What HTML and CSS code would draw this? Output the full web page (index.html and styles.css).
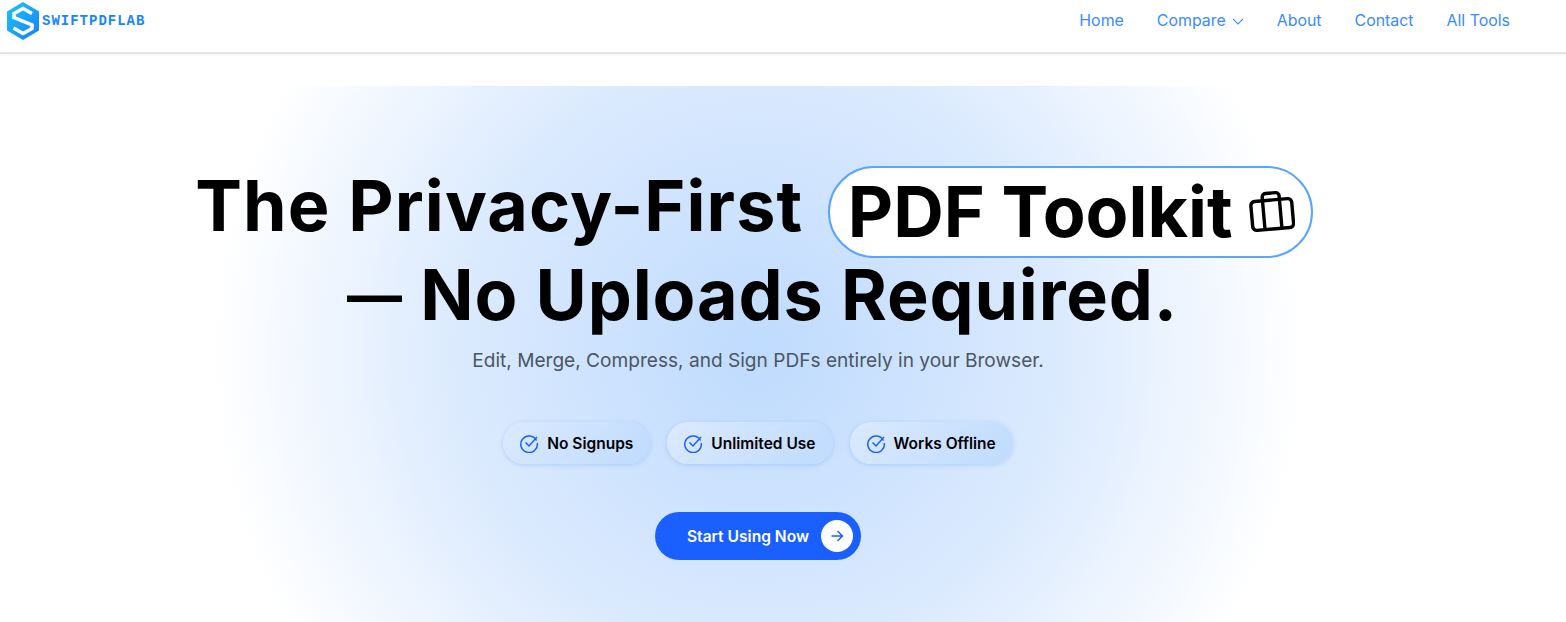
FILE: index.html
```html
<!DOCTYPE html>
<html lang="en">
<head>
  <meta charset="UTF-8">
  <meta name="viewport" content="width=device-width, initial-scale=1.0">
  <title>SwiftPDFLab</title>
  <link rel="stylesheet" href="styles.css">
</head>
<body>

  <header class="site-header">
    <a href="#" class="logo">
      <svg class="logo-mark" width="34" height="40" viewBox="0 0 34 40">
        <defs>
          <linearGradient id="logoGrad" x1="0" y1="0" x2="1" y2="1">
            <stop offset="0" stop-color="#19c8f5"/>
            <stop offset="1" stop-color="#1a7dfb"/>
          </linearGradient>
        </defs>
        <path fill="url(#logoGrad)" d="M17 1 33 10.500V29.500L17 39 1 29.500V10.500Z"/>
        <path fill="none" stroke="#fff" stroke-width="3.500" d="M26 12.500 17 7.500 8 12.500V16.500L26 24V27.500L17 32.500 7.500 27"/>
      </svg>
      <span class="logo-text">SWIFTPDFLAB</span>
    </a>
    <nav class="nav">
      <a href="#">Home</a>
      <a href="#" class="nav-drop">Compare
        <svg width="12" height="12" viewBox="0 0 12 12"><path d="M1 3.800 6 8.800 11 3.800" fill="none" stroke="currentColor" stroke-width="1.200"/></svg>
      </a>
      <a href="#">About</a>
      <a href="#">Contact</a>
      <a href="#">All Tools</a>
    </nav>
  </header>

  <section class="hero">
    <h1 class="hero-title">
      <span class="title-line"><span class="title-lead">The Privacy-First</span>
        <span class="title-pill">PDF Toolkit
          <svg class="case-icon" width="46" height="46" viewBox="0 0 46 46">
            <g fill="none" stroke="#000" stroke-width="3.400" stroke-linejoin="round" transform="rotate(-5 23 23)">
              <rect x="2.500" y="11" width="41" height="29" rx="4"/>
              <path d="M14.500 11V40M31.500 11V40M14.500 11V7.500A3.500 3.500 0 0 1 18 4H28A3.500 3.500 0 0 1 31.500 7.500V11"/>
            </g>
          </svg>
        </span>
      </span>
      <span class="title-line title-second"><span class="title-dash">—</span> No Uploads Required.</span>
    </h1>
    <p class="hero-sub">Edit, Merge, Compress, and Sign PDFs entirely in your Browser.</p>

    <div class="chips">
      <div class="chip">
        <svg width="20" height="20" viewBox="0 0 20 20"><path d="M17.500 7.500A8.300 8.300 0 1 0 18.300 10M6.500 9.500 10 13 18 4" fill="none" stroke="#1a5fff" stroke-width="1.500"/></svg>
        No Signups
      </div>
      <div class="chip">
        <svg width="20" height="20" viewBox="0 0 20 20"><path d="M17.500 7.500A8.300 8.300 0 1 0 18.300 10M6.500 9.500 10 13 18 4" fill="none" stroke="#1a5fff" stroke-width="1.500"/></svg>
        Unlimited Use
      </div>
      <div class="chip">
        <svg width="20" height="20" viewBox="0 0 20 20"><path d="M17.500 7.500A8.300 8.300 0 1 0 18.300 10M6.500 9.500 10 13 18 4" fill="none" stroke="#1a5fff" stroke-width="1.500"/></svg>
        Works Offline
      </div>
    </div>

    <a href="#" class="start-btn">Start Using Now
      <span class="start-arrow">
        <svg width="14" height="14" viewBox="0 0 14 14"><path d="M1.500 7H12.500M7.500 2 12.500 7 7.500 12" fill="none" stroke="#1a5fff" stroke-width="1.400"/></svg>
      </span>
    </a>
  </section>

</body>
</html>
```

FILE: styles.css
```css
* {
  box-sizing: border-box;
}

body {
  margin: 0;
  font-family: Inter, "Noto Sans", sans-serif;
  background-color: #fff;
  color: #000;
  overflow: hidden;
}

a {
  text-decoration: none;
}

.site-header {
  height: 54px;
  display: flex;
  justify-content: space-between;
  padding: 0 56px 14px 6px;
  border-bottom: 2px solid #e5e5e5;
  box-shadow: 0 1px 2px rgba(0, 0, 0, 0.05);
  align-items: flex-start;
}

.logo {
  display: flex;
  align-items: center;
  padding-top: 1px;
}

.logo-text {
  font-family: "Liberation Mono", monospace;
  font-weight: 700;
  font-size: 14px;
  letter-spacing: 1px;
  color: #1a86fb;
  margin-left: 2px;
}

.nav {
  display: flex;
  gap: 33px;
  padding-top: 11px;
}

.nav a {
  font-size: 15.900px;
  line-height: 20px;
  color: #3a8bff;
  display: flex;
  align-items: center;
  gap: 6px;
}

.hero {
  width: 1516px;
  height: 536px;
  margin-top: 32px;
  padding-top: 75px;
  display: flex;
  flex-direction: column;
  align-items: center;
  background: radial-gradient(circle 545px at center, #bfdbfe 0%, #dbeafe 55%, #fff 100%);
}

.hero-title {
  margin: 0;
  font-size: 70px;
  font-weight: 700;
  line-height: 90px;
  text-align: center;
  white-space: nowrap;
}

.title-line {
  display: block;
}

.title-second {
  margin-top: -1px;
  padding-left: 9px;
  letter-spacing: 0.850px;
}

.title-lead {
  letter-spacing: 1.100px;
}

.title-dash {
  font-size: 55px;
  vertical-align: 5px;
}

.title-pill {
  display: inline-flex;
  align-items: center;
  gap: 16px;
  height: 92px;
  margin: -10px 8px -10px 8px;
  padding: 0 16px 0 18px;
  background-color: #fff;
  border: 2px solid #5aa5ff;
  border-radius: 46px;
  vertical-align: middle;
}

.case-icon {
  flex-shrink: 0;
}

.hero-sub {
  margin: 6px 0 0;
  font-size: 19.100px;
  line-height: 28px;
  color: #4b5563;
}

.chips {
  display: flex;
  gap: 17px;
  margin-top: 48px;
}

.chip {
  display: flex;
  align-items: center;
  gap: 8px;
  height: 42px;
  padding: 0 17px 0 16px;
  font-size: 15.500px;
  font-weight: 600;
  border-radius: 21px;
  background: linear-gradient(135deg, #dbeafe, #bfdbfe);
  box-shadow: 0 1px 4px rgba(59, 130, 246, 0.25);
}

.start-btn {
  display: flex;
  align-items: center;
  gap: 12px;
  height: 48px;
  margin-top: 48px;
  padding: 0 8px 0 32px;
  font-size: 15.600px;
  font-weight: 600;
  color: #fff;
  background-color: #1a5fff;
  border-radius: 24px;
}

.start-arrow {
  width: 32px;
  height: 32px;
  display: flex;
  align-items: center;
  justify-content: center;
  background-color: #fff;
  border-radius: 50%;
}
```
